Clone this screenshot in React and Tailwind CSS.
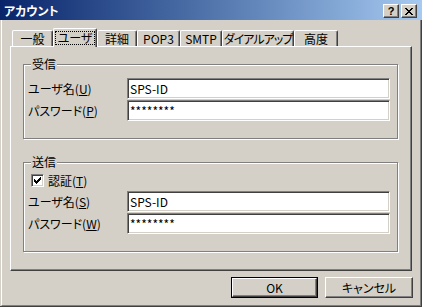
import React from 'react';

const raised =
  'border border-t-white border-l-white border-r-[#404040] border-b-[#404040] shadow-[inset_-1px_-1px_0_#808080] bg-[#D4D0C8]';
const sunken =
  'border border-t-[#808080] border-l-[#808080] border-r-white border-b-white shadow-[inset_1px_1px_0_#404040,inset_-1px_-1px_0_#D4D0C8] bg-white';

function Tab({ label, w, sel, tight }) {
  if (sel) {
    return (
      <div
        className={`relative z-10 -mb-[1px] h-[19px] ${w} shrink-0 flex items-start justify-center pt-[2px] bg-[#D4D0C8] border-l border-t border-white border-r border-r-[#404040] shadow-[inset_-1px_0_0_#808080] rounded-t-[2px] whitespace-nowrap`}
      >
        <span className="border border-dotted border-black px-[2px] h-[14px] leading-[12px] flex items-center">{label}</span>
      </div>
    );
  }
  return (
    <div
      className={`h-[16px] ${w} shrink-0 flex items-center justify-center bg-[#D4D0C8] border-l border-t border-white border-r border-r-[#404040] shadow-[inset_-1px_0_0_#808080] rounded-t-[2px] leading-none whitespace-nowrap ${tight ? 'tracking-[-1px]' : ''}`}
    >
      {label}
    </div>
  );
}

function Field({ label, k, value }) {
  return (
    <div className="flex items-center h-[21px]">
      <span className="w-[99px] leading-none">
        {label}(<span className="underline underline-offset-[1px]">{k}</span>)
      </span>
      <div className={`w-[263px] h-[21px] ${sunken} flex items-center pl-[2px] leading-none text-black`}>
        {value}
      </div>
    </div>
  );
}

function Group({ title, className, children }) {
  return (
    <div
      className={`relative ml-[12px] w-[375px] border border-[#808080] shadow-[inset_1px_1px_0_#fff,1px_1px_0_#fff] ${className}`}
    >
      <span className="absolute left-[7px] -top-[8px] px-[1px] bg-[#D4D0C8] leading-[14px]">{title}</span>
      {children}
    </div>
  );
}

export default function App() {
  return (
    <div className="w-[422px] h-[307px] bg-[#D4D0C8] flex flex-col overflow-hidden text-[12px] text-black font-['Noto_Sans_CJK_JP',sans-serif] [font-feature-settings:'palt']">
      {/* title bar */}
      <div className="h-[20px] shrink-0 flex items-center pt-[2px] pl-[4px] pr-[5px] bg-gradient-to-r from-[#0A246A] to-[#A6CAF0]">
        <span className="text-white font-bold leading-none">アカウント</span>
        <div className="ml-auto flex gap-[2px]">
          <div className={`w-[16px] h-[14px] ${raised} flex items-center justify-center font-bold text-[11px] leading-none font-['Liberation_Sans',sans-serif]`}>
            ?
          </div>
          <div className={`w-[16px] h-[14px] ${raised} flex items-center justify-center`}>
            <svg width="8" height="7" viewBox="0 0 8 7" shapeRendering="crispEdges">
              <path d="M0 0h2v1H0zM6 0h2v1H6zM1 1h2v1H1zM5 1h2v1H5zM2 2h4v1H2zM3 3h2v1H3zM2 4h4v1H2zM1 5h2v1H1zM5 5h2v1H5zM0 6h2v1H0zM6 6h2v1H6z" fill="#000" />
            </svg>
          </div>
        </div>
      </div>

      {/* window body */}
      <div className="flex-1 flex pl-[1px] border-r border-b border-[#404040]">
        <div className="flex-1 flex flex-col border-l border-white border-r border-b border-r-[#808080] border-b-[#808080]">
          <div className="px-[8px]">
            {/* tabs */}
            <div className="h-[26px] flex items-end pl-[2px]">
              <Tab label="一般" w="w-[41px]" />
              <Tab label="ユーザ" w="w-[44px]" sel />
              <Tab label="詳細" w="w-[40px]" />
              <Tab label="POP3" w="w-[43px]" />
              <Tab label="SMTP" w="w-[42px]" />
              <Tab label="ダイアルアップ" w="w-[72px]" tight />
              <Tab label="高度" w="w-[44px]" />
            </div>

            {/* tab panel */}
            <div className="h-[225px] border border-t-white border-l-white border-r-[#404040] border-b-[#404040] shadow-[inset_-1px_-1px_0_#808080]">
              <Group title="受信" className="mt-[17px] h-[75px]">
                <div className="pt-[13px] pl-[4px] flex flex-col gap-[1px]">
                  <Field label="ユーザ名" k="U" value="SPS-ID" />
                  <Field label="パスワード" k="P" value="********" />
                </div>
              </Group>

              <Group title="送信" className="mt-[23px] h-[90px]">
                <div className="pt-[11px] pl-[7px] flex items-center h-[24px] gap-[4px]">
                  <div className={`w-[13px] h-[13px] ${sunken} flex items-center justify-center`}>
                    <svg width="7" height="7" viewBox="0 0 7 7" shapeRendering="crispEdges">
                      <path d="M6 0h1v3H6zM5 1h1v3H5zM4 2h1v3H4zM3 3h1v3H3zM2 4h1v3H2zM1 3h1v3H1zM0 2h1v3H0z" fill="#000" />
                    </svg>
                  </div>
                  <span className="leading-none">
                    認証(<span className="underline underline-offset-[1px]">T</span>)
                  </span>
                </div>
                <div className="mt-[4px] pl-[4px] flex flex-col gap-[1px]">
                  <Field label="ユーザ名" k="S" value="SPS-ID" />
                  <Field label="パスワード" k="W" value="********" />
                </div>
              </Group>
            </div>
          </div>

          {/* buttons */}
          <div className="mt-[6px] flex justify-end gap-[7px] pr-[7px]">
            <div className="w-[87px] h-[21px] border border-black">
              <div className={`w-full h-full ${raised} flex items-center justify-center leading-none`}>OK</div>
            </div>
            <div className={`w-[88px] h-[21px] ${raised} flex items-center justify-center leading-none`}>キャンセル</div>
          </div>
        </div>
      </div>
    </div>
  );
}
